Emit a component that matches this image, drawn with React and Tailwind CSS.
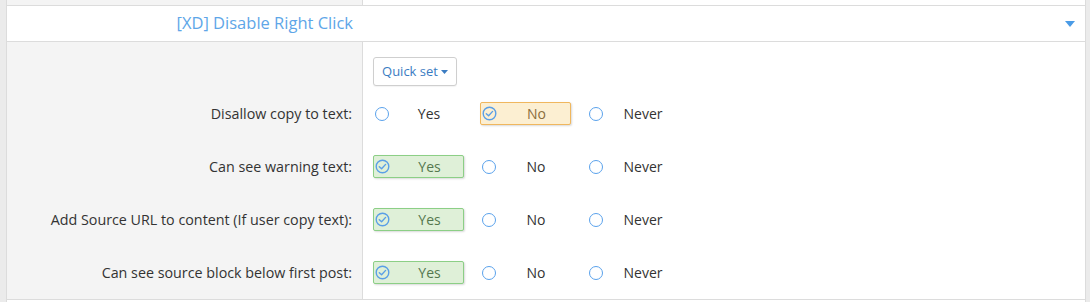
import React from 'react';

const rows = [
  { label: 'Disallow copy to text:', value: 'no' },
  { label: 'Can see warning text:', value: 'yes' },
  { label: 'Add Source URL to content (If user copy text):', value: 'yes' },
  { label: 'Can see source block below first post:', value: 'yes' },
];

const options = [
  { key: 'yes', text: 'Yes', on: 'bg-[#dff0d8] border-[#8ccf86] text-[#55784f]' },
  { key: 'no', text: 'No', on: 'bg-[#fcefd2] border-[#f0b75e] text-[#8b6d3c]' },
  { key: 'never', text: 'Never', on: 'bg-[#f2dede] border-[#e0a0a0] text-[#a94442]' },
];

const Circle = () => (
  <span className="w-[14px] h-[14px] rounded-full border-[1.6px] border-[#5aa2ec] bg-white shrink-0" />
);

const CheckCircle = () => (
  <svg width="15" height="15" viewBox="0 0 15 15" className="shrink-0">
    <circle cx="7.5" cy="7.5" r="6.3" fill="none" stroke="#5a9fe6" strokeWidth="1.4" />
    <path d="M4.3 7.7 L6.6 9.8 L10.6 5.4" fill="none" stroke="#5a9fe6" strokeWidth="1.4" strokeLinecap="round" strokeLinejoin="round" />
  </svg>
);

const Option = ({ opt, selected }) => (
  <div
    className={`w-[91px] h-[23px] flex items-center pl-[1px] rounded-[2px] border ${
      selected ? `${opt.on} shadow-[1px_1px_2px_rgba(0,0,0,0.15)]` : 'border-transparent text-[#333]'
    }`}
  >
    {selected ? <CheckCircle /> : <Circle />}
    <span className="flex-1 text-center pl-[6px]">{opt.text}</span>
  </div>
);

const App = () => {
  return (
    <div
      className="w-[1090px] h-[302px] bg-[#ebebeb] pl-[6px] pr-[4px] overflow-hidden text-[14px]"
      style={{ fontFamily: '"Open Sans", "Noto Sans", sans-serif' }}
    >
      <div className="border-x border-[#dcdcdc] bg-white h-full">
        <div className="grid grid-cols-[356px_1fr] h-[6px] border-b border-[#dcdcdc]">
          <div className="bg-[#f4f4f4] border-r border-[#dcdcdc]" />
          <div />
        </div>
        <div className="flex items-center justify-between h-[36px] border-b border-[#dcdcdc] bg-white">
          <div className="w-[356px] text-right pr-[10px] text-[16.5px] text-[#5ea6e8]">[XD] Disable Right Click</div>
          <svg width="10" height="6" viewBox="0 0 10 6" className="mr-[10px]">
            <path d="M0 0 L10 0 L5 6 Z" fill="#4a9be6" />
          </svg>
        </div>
        <div className="grid grid-cols-[356px_1fr] border-b border-[#dcdcdc]">
          <div className="bg-[#f4f4f4] border-r border-[#dcdcdc] pt-[45px]">
            {rows.map((r) => (
              <div key={r.label} className="h-[53px] flex items-center justify-end pr-[10px] text-[14.3px] text-[#333]">
                {r.label}
              </div>
            ))}
          </div>
          <div className="pl-[10px] pt-[15px]">
            <button className="h-[29px] w-[84px] border border-[#cfcfcf] rounded-[3px] bg-white text-[13px] text-[#3b7cc2] flex items-center justify-center gap-[3px] shadow-[0_1px_1px_rgba(0,0,0,0.05)]">
              Quick set
              <svg width="7" height="4" viewBox="0 0 7 4">
                <path d="M0 0 L7 0 L3.5 4 Z" fill="#3b7cc2" />
              </svg>
            </button>
            <div className="pt-[1px]">
              {rows.map((r) => (
                <div key={r.label} className="h-[53px] flex items-center gap-[16px]">
                  {options.map((o) => (
                    <Option key={o.key} opt={o} selected={r.value === o.key} />
                  ))}
                </div>
              ))}
            </div>
          </div>
        </div>
      </div>
    </div>
  );
};

export default App;
